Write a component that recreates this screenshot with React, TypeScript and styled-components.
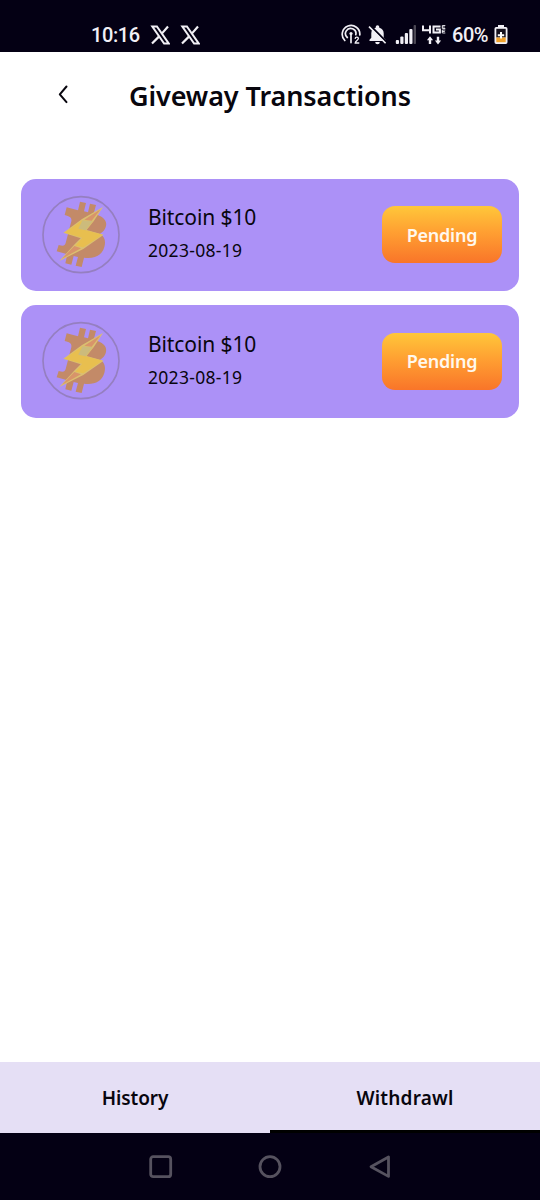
import React from "react";
import styled, { createGlobalStyle } from "styled-components";

const GlobalStyle = createGlobalStyle`
  * { box-sizing: border-box; }
  body { margin: 0; background: #fff; }
`;

const Screen = styled.div`
  display: flex;
  flex-direction: column;
  width: 540px;
  height: 1200px;
  background: #fff;
  color: #08060e;
  font-family: "Noto Sans", sans-serif;
`;

const StatusBar = styled.header`
  display: flex;
  align-items: center;
  justify-content: space-between;
  height: 52px;
  padding: 17px 32px 0 91px;
  background: #040014;
  color: #f1eff5;
`;

const StatusGroup = styled.div<{ $gap: number }>`
  display: flex;
  align-items: center;
  gap: ${(p) => p.$gap}px;
`;

const StatusText = styled.span<{ $spacing: number }>`
  font: 500 20px/24px Roboto, sans-serif;
  letter-spacing: ${(p) => p.$spacing}px;
  white-space: nowrap;
`;

const TitleBar = styled.div`
  display: flex;
  align-items: center;
  height: 86px;
  padding-left: 57px;
`;

const BackButton = styled.button`
  display: flex;
  width: 72px;
  padding: 0;
  border: 0;
  background: none;
  color: inherit;
`;

const Title = styled.h1`
  margin: 0;
  padding-top: 1px;
  font-size: 27px;
  font-weight: 600;
  line-height: 36px;
  letter-spacing: -0.1px;
  white-space: nowrap;
`;

const List = styled.main`
  display: flex;
  flex: 1;
  flex-direction: column;
  gap: 14px;
  padding: 40.5px 21px 0;
`;

const Card = styled.article`
  display: flex;
  align-items: center;
  height: 112.5px;
  padding: 0 17px 0 20px;
  border-radius: 15px;
  background: #ac91f7;
`;

const Details = styled.div`
  display: flex;
  flex: 1;
  flex-direction: column;
  gap: 4px;
  padding: 0 0 3px 27px;
`;

const Amount = styled.span`
  font-size: 21px;
  line-height: 30px;
  letter-spacing: -0.1px;
  white-space: nowrap;
`;

const DateText = styled.time`
  font-size: 17.5px;
  line-height: 28px;
  letter-spacing: 0.3px;
  white-space: nowrap;
`;

const Status = styled.button`
  width: 120px;
  height: 57px;
  padding: 0;
  border: 0;
  border-radius: 13px;
  background: linear-gradient(#ffc73a, #ffa032 45%, #f97529);
  color: #fff8ee;
  font: 600 18px/24px "Noto Sans", sans-serif;
  letter-spacing: -0.25px;
`;

const Tabs = styled.nav`
  display: flex;
  height: 71px;
  background: #e5dff5;
`;

const Tab = styled.button<{ $active?: boolean }>`
  flex: 1;
  padding: 3px 0 0;
  border: 0;
  border-bottom: 3px solid ${(p) => (p.$active ? "#000" : "transparent")};
  background: none;
  color: inherit;
  font: 600 19px/26px "Noto Sans", sans-serif;
  letter-spacing: ${(p) => (p.$active ? 0.2 : -0.1)}px;
`;

const NavBar = styled.footer`
  display: flex;
  align-items: center;
  justify-content: center;
  gap: 85px;
  height: 67px;
  background: #040014;
  color: #56525f;
`;

const XIcon = () => (
  <svg width="20" height="20" viewBox="0 0 20 20" fill="none" stroke="currentColor">
    <path d="M18 1.5 11.8 8.6M8.9 11.6 2 18.5" strokeWidth="2.2" />
    <path d="M2.3 1.5h4.6l11.8 17h-4.6Z" strokeWidth="2" />
  </svg>
);

const HotspotIcon = () => (
  <svg width="21" height="21" viewBox="0 0 21 21" fill="none" stroke="currentColor" strokeWidth="1.7" strokeLinecap="round">
    <path d="M3.8 16.5a8.8 8.8 0 1 1 15-5.5M6.3 13.5a5.2 5.2 0 1 1 8.5-2.8M10 10v8.6" />
    <circle cx="10" cy="9.5" r="1.6" fill="currentColor" stroke="none" />
    <path d="M14.2 14.4c.2-1.7 3.2-1.6 3.2.2 0 1.4-3.2 2.6-3.2 4.4h3.6" strokeWidth="1.3" />
  </svg>
);

const MutedBellIcon = () => (
  <svg width="19" height="20" viewBox="0 0 19 20">
    <path d="M1.5 16v-1.3l1.8-2V8.2c0-2.9 1.7-4.9 4.4-5.5V2a1.8 1.8 0 0 1 3.6 0v.7c2.7.6 4.4 2.6 4.4 5.5v4.5l1.8 2V16ZM7.2 17h4.6a2.3 2.3 0 0 1-4.6 0Z" fill="currentColor" />
    <path d="m2.4.8 16 16" stroke="#040014" strokeWidth="2" />
    <path d="m1 1.6 16.6 16.6" stroke="currentColor" strokeWidth="1.6" />
  </svg>
);

const SignalIcon = () => (
  <svg width="23" height="20" viewBox="-2 0 23 20" fill="currentColor">
    <rect x="0.8" y="15" width="3.2" height="4" rx="1" />
    <rect x="5.3" y="11.5" width="3.2" height="7.5" rx="1" />
    <rect x="9.8" y="8" width="3.2" height="11" rx="1" />
    <rect x="14.3" y="4" width="3.2" height="15" rx="1" />
    <rect x="18.6" y="0" width="2.4" height="19" rx="0.8" fill="#4b4754" />
  </svg>
);

const NetworkIcon = () => (
  <svg width="24" height="21" viewBox="0 0 24 21" fill="none" stroke="currentColor" strokeWidth="2">
    <path d="M1 1.5v4.7h8M8 1.5v8M18.5 2.5h-7v6h6.4V5.6H14" />
    <path d="M23.3 1.5h-3v3h3M20 3h2.8M23.3 6h-3v3h3M20 7.5h2.8" strokeWidth=".9" />
    <path d="M8 20v-4.5M16 12.8v4.5" strokeWidth="2.4" />
    <path d="M4.9 16.2 8 12.2l3.1 4ZM12.9 16.5l3.1 4 3.1-4Z" fill="currentColor" stroke="none" />
  </svg>
);

const BatteryIcon = () => (
  <svg width="14" height="20" viewBox="0 0 14 20">
    <path d="M4 0h6v2h1.8A1.7 1.7 0 0 1 13.5 3.7v13.6a1.7 1.7 0 0 1-1.7 1.7H2.2a1.7 1.7 0 0 1-1.7-1.7V3.7A1.7 1.7 0 0 1 2.2 2H4Z" fill="#f1eff5" />
    <path d="M2.3 3.8h9.4v8.7H2.3Z" fill="#15101d" />
    <path d="M2.3 12.5h9.4v4.7H2.3Z" fill="#f2a32d" />
    <path d="M7 7v6.4M3.8 10.2h6.4" stroke="#fff" strokeWidth="2" />
  </svg>
);

const BitcoinLogo = () => (
  <svg width="80" height="80" viewBox="33 44 240 240">
    <circle cx="153" cy="163" r="114" fill="none" stroke="#957fc0" strokeWidth="5" />
    <path
      fill="#c38a68"
      d="M110 81 144 90 150 64 168 68 162 93 174 96 180 70 198 74 191 100C217 107 232 118 228 137 225 150 217 156 210 160 224 168 228 182 223 200 216 226 192 236 162 232L155 260 137 256 144 230 131 227 124 253 106 249 112 222 80 213 86 194C100 198 104 197 107 188L124 123C126 112 120 108 104 104Z"
    />
    <path d="M219 80 156 116 100 157 152 174 134 192 88 242 160 206 221 163 170 149 191 123Z" fill="#dbbf70" />
    <path d="M157 120 188 122 167 150 218 163 160 201 136 196 157 172 104 157Z" fill="#e8bf4f" />
    <path d="m157 120 31 2-21 28-22-5Z" fill="#ccbb7c" />
    <path d="m212 87-49 31 22 3ZM133 197l-37 38 57-31Z" fill="#d8946a" />
  </svg>
);

const transactions = [
  { id: 1, amount: "Bitcoin $10", date: "2023-08-19", status: "Pending" },
  { id: 2, amount: "Bitcoin $10", date: "2023-08-19", status: "Pending" },
];

export default function App() {
  return (
    <Screen>
      <GlobalStyle />
      <StatusBar>
        <StatusGroup $gap={10}>
          <StatusText $spacing={-0.4}>10:16</StatusText>
          <XIcon />
          <XIcon />
        </StatusGroup>
        <StatusGroup $gap={6}>
          <HotspotIcon />
          <MutedBellIcon />
          <SignalIcon />
          <NetworkIcon />
          <StatusText $spacing={-0.5}>60%</StatusText>
          <BatteryIcon />
        </StatusGroup>
      </StatusBar>
      <TitleBar>
        <BackButton aria-label="Back">
          <svg width="12" height="20" viewBox="0 0 12 20" fill="none" stroke="currentColor" strokeWidth="2" strokeLinecap="round" strokeLinejoin="round">
            <path d="M9.5 1.5 2.8 9.3l6.7 7.8" />
          </svg>
        </BackButton>
        <Title>Giveway Transactions</Title>
      </TitleBar>
      <List>
        {transactions.map((item) => (
          <Card key={item.id}>
            <BitcoinLogo />
            <Details>
              <Amount>{item.amount}</Amount>
              <DateText>{item.date}</DateText>
            </Details>
            <Status>{item.status}</Status>
          </Card>
        ))}
      </List>
      <Tabs>
        <Tab>History</Tab>
        <Tab $active>Withdrawl</Tab>
      </Tabs>
      <NavBar>
        <svg width="24" height="24" viewBox="0 0 24 24" fill="none" stroke="currentColor" strokeWidth="2.8">
          <rect x="1.7" y="1.7" width="20" height="20" rx="2.5" />
        </svg>
        <svg width="24" height="24" viewBox="0 0 24 24" fill="none" stroke="currentColor" strokeWidth="2.8">
          <circle cx="12" cy="11.7" r="10" />
        </svg>
        <svg width="24" height="24" viewBox="0 0 24 24" fill="none" stroke="currentColor" strokeWidth="2.8" strokeLinejoin="round">
          <path d="M21.5 2v19.4L4 11.7Z" />
        </svg>
      </NavBar>
    </Screen>
  );
}
